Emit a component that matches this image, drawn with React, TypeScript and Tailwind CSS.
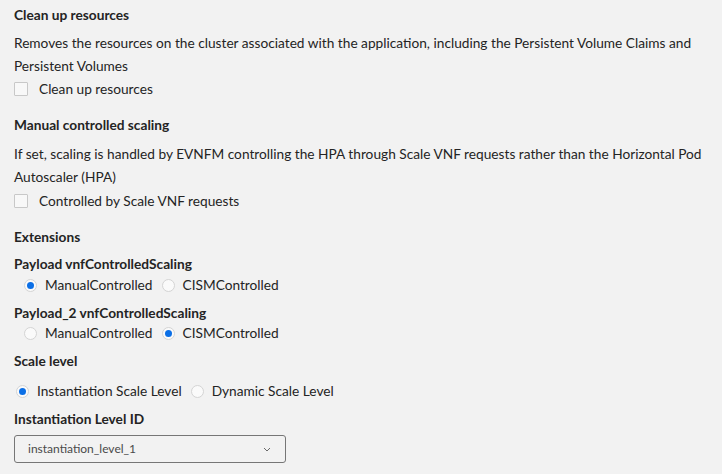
import React from "react";

function Checkbox({ label }: { label: string }) {
  return (
    <label className="flex items-center h-[22px]">
      <span className="w-[14px] h-[14px] border border-[#c8c8c8] bg-[#f8f8f8] rounded-[1px]" />
      <span className="ml-[11px]">{label}</span>
    </label>
  );
}

function Radio({ label, checked }: { label: string; checked?: boolean }) {
  return (
    <span className="flex items-center">
      <span className="w-[13px] h-[13px] rounded-full border border-[#d4d4d4] bg-[#fafafa] flex items-center justify-center">
        {checked && <span className="w-[7px] h-[7px] rounded-full bg-[#0b6fe6]" />}
      </span>
      <span className="ml-[8px]">{label}</span>
    </span>
  );
}

export default function App() {
  return (
    <div
      className="w-[722px] h-[474px] bg-[#f2f2f2] text-[#242424] text-[13.7px] px-[14px] overflow-hidden"
      style={{ fontFamily: 'Lato, sans-serif' }}
    >
      <div className="pt-[4px] font-bold leading-[22px]">Clean up resources</div>
      <p className="mt-[5px] leading-[23px]">
        Removes the resources on the cluster associated with the application, including the Persistent Volume Claims and
        Persistent Volumes
      </p>
      <div className="mt-[1px]"><Checkbox label="Clean up resources" /></div>

      <div className="mt-[14px] font-bold leading-[22px]">Manual controlled scaling</div>
      <p className="mt-[6px] leading-[23px]">
        If set, scaling is handled by EVNFM controlling the HPA through Scale VNF requests rather than the Horizontal Pod
        Autoscaler (HPA)
      </p>
      <div className="mt-[2px]"><Checkbox label="Controlled by Scale VNF requests" /></div>

      <div className="mt-[14px] font-bold leading-[22px]">Extensions</div>
      <div className="mt-[5px] font-bold leading-[22px]">Payload vnfControlledScaling</div>
      <div className="flex gap-[9px] pl-[10px] leading-[20px] mt-[0px]">
        <Radio label="ManualControlled" checked />
        <Radio label="CISMControlled" />
      </div>
      <div className="mt-[7px] font-bold leading-[22px]">Payload_2 vnfControlledScaling</div>
      <div className="flex gap-[9px] pl-[10px] leading-[20px] mt-[-1px]">
        <Radio label="ManualControlled" />
        <Radio label="CISMControlled" checked />
      </div>
      <div className="mt-[7px] font-bold leading-[22px]">Scale level</div>
      <div className="flex gap-[9px] pl-[2px] leading-[20px] mt-[9px]">
        <Radio label="Instantiation Scale Level" checked />
        <Radio label="Dynamic Scale Level" />
      </div>
      <div className="mt-[7px] font-bold leading-[22px]">Instantiation Level ID</div>
      <div className="mt-[5px] w-[272px] h-[28px] border border-[#767676] rounded-[3px] flex items-center justify-between pl-[13px] pr-[14px]">
        <span className="text-[12px] text-[#4a4a4a]">instantiation_level_1</span>
        <svg width="8" height="5" viewBox="0 0 8 5" fill="none">
          <path d="M1 1l3 3 3-3" stroke="#6a6a6a" strokeWidth="1" />
        </svg>
      </div>
    </div>
  );
}
